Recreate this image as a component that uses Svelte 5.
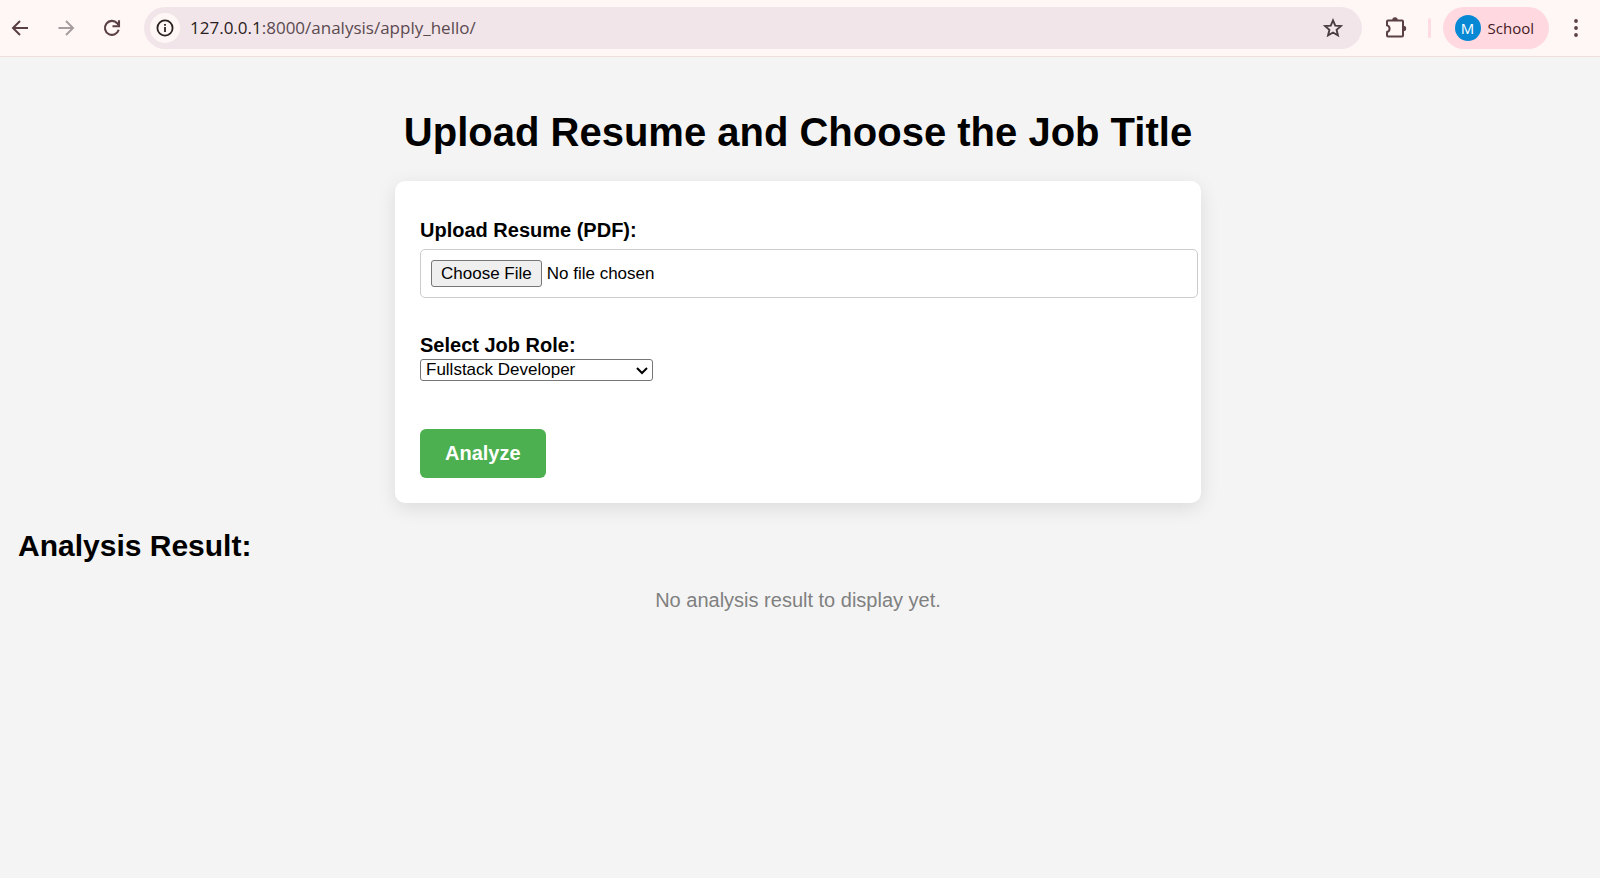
<script>
  const roles = [
    'Fullstack Developer',
    'Frontend Developer',
    'Backend Developer',
    'Data Scientist',
    'DevOps Engineer'
  ];
  let role = $state(roles[0]);
</script>

<div class="window">
  <header class="toolbar">
    <nav class="nav" aria-label="Browser navigation">
      <button class="icon" aria-label="Back">
        <svg width="24" height="24" viewBox="0 0 24 24" fill="none" stroke="#5a4045" stroke-width="2"><path d="M20 12H5.5M12 5l-7 7 7 7" /></svg>
      </button>
      <button class="icon" aria-label="Forward" disabled>
        <svg width="24" height="24" viewBox="0 0 24 24" fill="none" stroke="#a59da0" stroke-width="2"><path d="M4.5 12h14M12 5l7 7-7 7" /></svg>
      </button>
      <button class="icon" aria-label="Reload">
        <svg width="24" height="24" viewBox="0 0 24 24" fill="none" stroke="#5a4045" stroke-width="2.1"><path d="M18.7 13.800A7 7 0 1 1 17.200 7.200L18.500 8.700" /><path d="M19 4.200V10.200h-6.500" /></svg>
      </button>
    </nav>

    <div class="address">
      <button class="info" aria-label="Site information">
        <svg width="20" height="20" viewBox="0 0 20 20" fill="none" stroke="#29221f" stroke-width="1.8"><circle cx="10" cy="10" r="7.600" /><path d="M10 9v5M10 6v1.800" /></svg>
      </button>
      <a class="url" href="#top"><span class="host">127.0.0.1</span>:8000/analysis/apply_hello/</a>
      <button class="icon" aria-label="Bookmark this page">
        <svg width="24" height="24" viewBox="0 0 24 24" fill="none" stroke="#4a3d42" stroke-width="1.9"><path d="M12 4.400l2.250 5.200 5.650.5-4.300 3.700 1.300 5.600L12 16.500 7.100 19.400l1.300-5.600-4.300-3.700 5.650-.5z" /></svg>
      </button>
    </div>

    <div class="tools">
      <button class="icon" aria-label="Extensions">
        <svg width="26" height="26" viewBox="0 0 26 26" fill="none" stroke="#5a4045" stroke-width="2" stroke-linejoin="round"><path d="M5 5.500H19a1 1 0 0 1 1 1V20.500a1 1 0 0 1-1 1H5a1 1 0 0 1-1-1V17a3.400 3.400 0 0 0 0-6.600V6.500a1 1 0 0 1 1-1z" /><path d="M9.300 5a2.700 2.700 0 0 1 5.400 0zM20.500 10.800a2.700 2.700 0 0 1 0 5.400z" fill="#5a4045" stroke="none" /></svg>
      </button>
      <span class="divider"></span>
      <button class="profile"><span class="avatar">M</span>School</button>
      <button class="icon" aria-label="Menu">
        <svg width="24" height="24" viewBox="0 0 24 24" fill="#5a4045"><circle cx="12" cy="5" r="1.900" /><circle cx="12" cy="12" r="1.900" /><circle cx="12" cy="19" r="1.900" /></svg>
      </button>
    </div>
  </header>

  <main id="top">
    <h1>Upload Resume and Choose the Job Title</h1>

    <form class="card" onsubmit={(e) => e.preventDefault()}>
      <label for="resume">Upload Resume (PDF):</label>
      <input id="resume" class="file" type="file" accept=".pdf" />

      <label for="role">Select Job Role:</label>
      <div class="picker">
        <select id="role" bind:value={role}>
          {#each roles as name}
            <option>{name}</option>
          {/each}
        </select>
        <svg class="chevron" width="12" height="8" viewBox="0 0 12 8" fill="none" stroke="#000" stroke-width="2"><path d="M1 1l5 5 5-5" /></svg>
      </div>

      <button class="submit" type="submit">Analyze</button>
    </form>

    <h2>Analysis Result:</h2>
    <p class="empty">No analysis result to display yet.</p>
  </main>
</div>

<style>
  :global(body) {
    margin: 0;
    background: #f4f4f4;
  }

  .window {
    font-family: "Liberation Sans", Arial, sans-serif;
    font-size: 20px;
    color: #000;
  }

  button {
    border: 0;
    background: none;
    font: inherit;
    color: inherit;
    padding: 0;
  }

  svg {
    display: block;
  }

  .toolbar {
    display: flex;
    align-items: center;
    height: 57px;
    padding: 0 12px 1px 8px;
    box-sizing: border-box;
    background: #fff7f5;
    border-bottom: 1px solid #eedfdd;
    font-family: "Open Sans", "Noto Sans", sans-serif;
    font-size: 15px;
  }

  .nav {
    display: flex;
    gap: 22px;
    margin-right: 20px;
  }

  .address {
    display: flex;
    flex: 1;
    align-items: center;
    height: 42px;
    padding: 0 17px 0 6px;
    border-radius: 21px;
    background: #f1e5e9;
  }

  .info {
    display: grid;
    place-items: center;
    width: 30px;
    height: 30px;
    border-radius: 50%;
    background: #fff7f5;
  }

  .url {
    flex: 1;
    margin-left: 10px;
    font-size: 17px;
    color: #5b4a50;
    text-decoration: none;
  }

  .host {
    color: #2a1c20;
  }

  .tools {
    display: flex;
    align-items: center;
    margin-left: 21px;
  }

  .divider {
    width: 3px;
    height: 20px;
    margin: 0 12px 0 19px;
    border-radius: 2px;
    background: #ffdce3;
  }

  .profile {
    display: flex;
    align-items: center;
    gap: 7px;
    height: 42px;
    margin-right: 15px;
    padding: 0 15px 0 12px;
    border-radius: 21px;
    background: #ffd8e0;
    color: #3f1824;
  }

  .avatar {
    display: grid;
    place-items: center;
    width: 26px;
    height: 26px;
    border-radius: 50%;
    background: #0688d4;
    color: #fff;
  }

  main {
    padding: 51px 22px 0 18px;
  }

  h1 {
    margin: 0 0 25px;
    font-size: 40px;
    line-height: 48px;
    text-align: center;
  }

  .card {
    display: flex;
    flex-direction: column;
    align-items: flex-start;
    max-width: 806px;
    margin: 0 auto 25px;
    padding: 38px 3px 25px 25px;
    box-sizing: border-box;
    border-radius: 10px;
    background: #fff;
    box-shadow: 0 5px 19px rgba(0, 0, 0, 0.1);
  }

  label {
    line-height: 23px;
    font-weight: bold;
  }

  .file {
    width: 100%;
    box-sizing: border-box;
    margin: 7px 0 36px;
    padding: 10px;
    border: 1px solid #ccc;
    border-radius: 5px;
    font: 17px "Liberation Sans", Arial, sans-serif;
  }

  .file::file-selector-button {
    height: 27px;
    margin-right: 5px;
    padding: 0 9px;
    border: 1px solid #767676;
    border-radius: 3px;
    background: #efefef;
    font: inherit;
  }

  .picker {
    position: relative;
    margin: 2px 0 48px;
  }

  select {
    display: block;
    width: 233px;
    height: 22px;
    padding: 0 24px 0 5px;
    border: 1px solid #767676;
    border-radius: 3px;
    background: #fff;
    color: #000;
    font: 17px/20px "Liberation Sans", Arial, sans-serif;
    appearance: none;
  }

  .chevron {
    position: absolute;
    top: 8px;
    right: 5px;
    pointer-events: none;
  }

  .submit {
    padding: 13px 25px;
    border-radius: 6px;
    background: #4caf50;
    color: #fff;
    font-weight: bold;
    line-height: 23px;
  }

  h2 {
    margin: 0 0 25px;
    font-size: 30px;
    line-height: 36px;
  }

  .empty {
    margin: 0;
    line-height: 23px;
    text-align: center;
    color: #808080;
  }
</style>
